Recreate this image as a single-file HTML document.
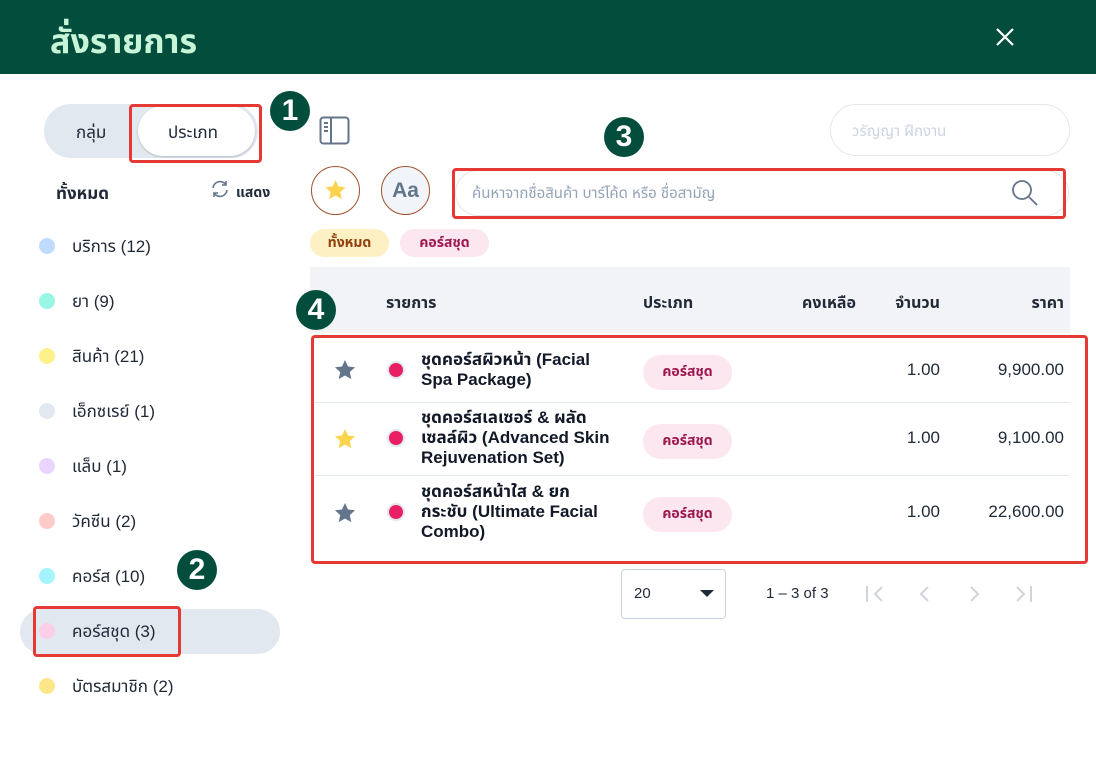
<!DOCTYPE html>
<html><head><meta charset="utf-8"><style>
*{box-sizing:border-box;margin:0;padding:0}
body{width:1096px;height:777px;background:#fff;font-family:"Liberation Sans","Noto Sans Thai",sans-serif;color:#1f2937;position:relative;overflow:hidden}
.a{position:absolute}
.hdr{left:0;top:0;width:1096px;height:74px;background:#024d3c}
.badge{width:40px;height:40px;border-radius:50%;background:#024d3c;color:#fff;font-size:30px;font-weight:bold;display:flex;align-items:center;justify-content:center}
.red{border:3px solid #e53935;border-radius:4px}
.dot{width:16px;height:16px;border-radius:50%}
.item{left:72px;font-size:17px;color:#1f2937}
.hcol{font-size:16px;font-weight:bold;top:292px}
.hr{text-align:right}
.chip{border-radius:14px;font-size:14px;font-weight:bold;display:flex;align-items:center;justify-content:center}
.tag{left:643px;width:89px;height:35px;border-radius:18px;background:#fce7f1;color:#9d174d;font-size:14px;font-weight:bold;display:flex;align-items:center;justify-content:center}
.nm{left:421px;font-size:17px;font-weight:bold;line-height:20px;color:#111827}
.num{font-size:17px;text-align:right}
</style></head><body>
<div class="a hdr"></div>
<div class="a" style="left:50px;top:18px;font-size:34px;font-weight:bold;color:#c8f5d8">สั่งรายการ</div>
<svg class="a" style="left:995px;top:27px" width="20" height="20"><path d="M2 2L18 18M18 2L2 18" stroke="#fff" stroke-width="2.2"/></svg>

<div class="a" style="left:44px;top:104px;width:214px;height:54px;border-radius:27px;background:#e2e8f0"></div>
<div class="a" style="left:76px;top:120px;font-size:17px">กลุ่ม</div>
<div class="a" style="left:138px;top:106px;width:117px;height:50px;border-radius:25px;background:#fff;box-shadow:0 1px 2px rgba(0,0,0,.2)"></div>
<div class="a" style="left:168px;top:120px;font-size:17px">ประเภท</div>
<div class="a red" style="left:129px;top:104px;width:133px;height:59px"></div>
<div class="a badge" style="left:270px;top:91px">1</div>
<svg class="a" style="left:319px;top:116px" width="32" height="29"><rect x="1.5" y="1.5" width="28" height="26" rx="3" fill="none" stroke="#64748b" stroke-width="2"/><path d="M12 2v25M5 7h4M5 11h4M5 15h4" stroke="#64748b" stroke-width="2"/></svg>

<div class="a" style="left:56px;top:181px;font-size:17px;font-weight:bold">ทั้งหมด</div>
<svg class="a" style="left:210px;top:179px" width="20" height="20"><path d="M3 9a7 7 0 0 1 13-3M17 11a7 7 0 0 1-13 3" fill="none" stroke="#64748b" stroke-width="1.6"/><path d="M16 2v4h-4M4 18v-4h4" fill="none" stroke="#64748b" stroke-width="1.6"/></svg>
<div class="a" style="left:236px;top:183px;font-size:14px;font-weight:bold">แสดง</div>

<div class="a" style="left:20px;top:609px;width:260px;height:45px;border-radius:23px;background:#e2e8f0"></div>
<div class="a dot" style="left:39px;top:238px;background:#bfdbfe"></div><div class="a item" style="top:234px">บริการ (12)</div>
<div class="a dot" style="left:39px;top:293px;background:#99f6e4"></div><div class="a item" style="top:289px">ยา (9)</div>
<div class="a dot" style="left:39px;top:348px;background:#fef08a"></div><div class="a item" style="top:344px">สินค้า (21)</div>
<div class="a dot" style="left:39px;top:403px;background:#e2e8f0"></div><div class="a item" style="top:399px">เอ็กซเรย์ (1)</div>
<div class="a dot" style="left:39px;top:458px;background:#e9d5ff"></div><div class="a item" style="top:454px">แล็บ (1)</div>
<div class="a dot" style="left:39px;top:513px;background:#fecaca"></div><div class="a item" style="top:509px">วัคซีน (2)</div>
<div class="a dot" style="left:39px;top:568px;background:#a5f3fc"></div><div class="a item" style="top:564px">คอร์ส (10)</div>
<div class="a dot" style="left:39px;top:623px;background:#fbcfe8"></div><div class="a item" style="top:619px">คอร์สชุด (3)</div>
<div class="a dot" style="left:39px;top:678px;background:#fde68a"></div><div class="a item" style="top:674px">บัตรสมาชิก (2)</div>
<div class="a badge" style="left:177px;top:550px">2</div>
<div class="a red" style="left:33px;top:606px;width:148px;height:51px"></div>

<div class="a" style="left:830px;top:104px;width:240px;height:52px;border:1px solid #e5e7eb;border-radius:26px"></div>
<div class="a" style="left:852px;top:120px;font-size:15px;color:#cbd5e1">วรัญญา ฝึกงาน</div>

<div class="a" style="left:311px;top:166px;width:49px;height:49px;border-radius:50%;border:1.5px solid #a0522d"></div>
<svg class="a" style="left:323px;top:178px" width="25" height="24" viewBox="0 0 24 24"><path d="M12 2l3 6.5 7 .8-5.2 4.8 1.5 7L12 17.5 5.7 21.1l1.5-7L2 9.3l7-.8z" fill="#fcd34d"/></svg>
<div class="a" style="left:381px;top:166px;width:49px;height:49px;border-radius:50%;border:1.5px solid #a0522d;background:#f1f5f9;color:#64748b;font-size:21px;font-weight:bold;display:flex;align-items:center;justify-content:center">Aa</div>
<div class="a badge" style="left:604px;top:117px">3</div>
<div class="a" style="left:455px;top:170px;width:614px;height:46px;border:1px solid #e5e7eb;border-radius:23px"></div>
<div class="a" style="left:472px;top:182px;font-size:15px;color:#94a3b8">ค้นหาจากชื่อสินค้า บาร์โค้ด  หรือ ชื่อสามัญ</div>
<svg class="a" style="left:1011px;top:179px" width="28" height="28"><circle cx="11" cy="11" r="9" fill="none" stroke="#64748b" stroke-width="1.8"/><path d="M18 18l8 8" stroke="#64748b" stroke-width="1.8"/></svg>
<div class="a red" style="left:452px;top:168px;width:614px;height:51px"></div>

<div class="a chip" style="left:310px;top:229px;width:79px;height:28px;background:#fdf1c4;color:#92400e">ทั้งหมด</div>
<div class="a chip" style="left:400px;top:229px;width:89px;height:28px;background:#fce7f1;color:#9d174d">คอร์สชุด</div>

<div class="a" style="left:310px;top:267px;width:760px;height:66px;background:#f1f3f6"></div>
<div class="a hcol" style="left:386px">รายการ</div>
<div class="a hcol" style="left:643px">ประเภท</div>
<div class="a hcol hr" style="left:756px;width:100px">คงเหลือ</div>
<div class="a hcol hr" style="left:840px;width:100px">จำนวน</div>
<div class="a hcol hr" style="left:964px;width:100px">ราคา</div>
<div class="a badge" style="left:296px;top:290px">4</div>

<div class="a" style="left:315px;top:402px;width:755px;height:1px;background:#e2e8f0"></div>
<div class="a" style="left:315px;top:475px;width:755px;height:1px;background:#e2e8f0"></div>

<svg class="a" style="left:333px;top:358px" width="24" height="24" viewBox="0 0 24 24"><path d="M12 2l3 6.5 7 .8-5.2 4.8 1.5 7L12 17.5 5.7 21.1l1.5-7L2 9.3l7-.8z" fill="#64748b"/></svg>
<svg class="a" style="left:333px;top:427px" width="24" height="24" viewBox="0 0 24 24"><path d="M12 2l3 6.5 7 .8-5.2 4.8 1.5 7L12 17.5 5.7 21.1l1.5-7L2 9.3l7-.8z" fill="#fcd34d"/></svg>
<svg class="a" style="left:333px;top:501px" width="24" height="24" viewBox="0 0 24 24"><path d="M12 2l3 6.5 7 .8-5.2 4.8 1.5 7L12 17.5 5.7 21.1l1.5-7L2 9.3l7-.8z" fill="#64748b"/></svg>
<div class="a dot" style="left:387px;top:361px;background:#e91e63;border:2px solid #e2e8f0;width:18px;height:18px"></div>
<div class="a dot" style="left:387px;top:429px;background:#e91e63;border:2px solid #e2e8f0;width:18px;height:18px"></div>
<div class="a dot" style="left:387px;top:503px;background:#e91e63;border:2px solid #e2e8f0;width:18px;height:18px"></div>

<div class="a nm" style="top:350px">ชุดคอร์สผิวหน้า (Facial<br>Spa Package)</div>
<div class="a nm" style="top:408px">ชุดคอร์สเลเซอร์ &amp; ผลัด<br>เซลล์ผิว (Advanced Skin<br>Rejuvenation Set)</div>
<div class="a nm" style="top:482px">ชุดคอร์สหน้าใส &amp; ยก<br>กระชับ (Ultimate Facial<br>Combo)</div>
<div class="a tag" style="top:355px">คอร์สชุด</div>
<div class="a tag" style="top:424px">คอร์สชุด</div>
<div class="a tag" style="top:497px">คอร์สชุด</div>
<div class="a num" style="left:880px;width:60px;top:360px">1.00</div>
<div class="a num" style="left:880px;width:60px;top:428px">1.00</div>
<div class="a num" style="left:880px;width:60px;top:502px">1.00</div>
<div class="a num" style="left:950px;width:114px;top:360px">9,900.00</div>
<div class="a num" style="left:950px;width:114px;top:428px">9,100.00</div>
<div class="a num" style="left:950px;width:114px;top:502px">22,600.00</div>
<div class="a red" style="left:311px;top:335px;width:777px;height:229px"></div>

<div class="a" style="left:621px;top:569px;width:105px;height:50px;border:1px solid #cbd5e1;border-radius:4px"></div>
<div class="a" style="left:634px;top:585px;font-size:15px">20</div>
<svg class="a" style="left:700px;top:590px" width="14" height="8"><path d="M0 0h14L7 7z" fill="#1f2937"/></svg>
<div class="a" style="left:766px;top:585px;font-size:15px">1 – 3 of 3</div>
<svg class="a" style="left:864px;top:584px" width="180" height="20" fill="none" stroke="#d1d5db" stroke-width="2"><path d="M3 2v16M18 3l-7 7 7 7"/><path d="M64 3l-7 7 7 7"/><path d="M107 3l7 7-7 7"/><path d="M153 3l7 7-7 7M167 2v16"/></svg>
</body></html>
